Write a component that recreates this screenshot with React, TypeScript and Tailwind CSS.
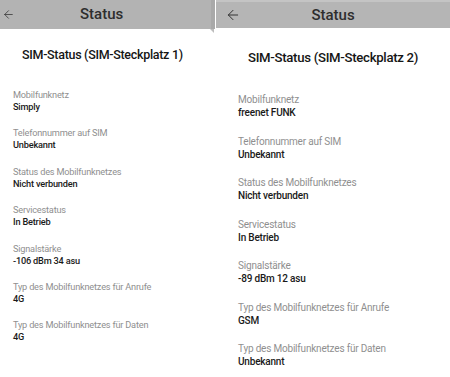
import React from 'react';
import { ArrowLeft } from 'lucide-react';

type Row = { label: string; value: string };

const sim1: Row[] = [
  { label: 'Mobilfunknetz', value: 'Simply' },
  { label: 'Telefonnummer auf SIM', value: 'Unbekannt' },
  { label: 'Status des Mobilfunknetzes', value: 'Nicht verbunden' },
  { label: 'Servicestatus', value: 'In Betrieb' },
  { label: 'Signalstärke', value: '-106 dBm 34 asu' },
  { label: 'Typ des Mobilfunknetzes für Anrufe', value: '4G' },
  { label: 'Typ des Mobilfunknetzes für Daten', value: '4G' },
];

const sim2: Row[] = [
  { label: 'Mobilfunknetz', value: 'freenet FUNK' },
  { label: 'Telefonnummer auf SIM', value: 'Unbekannt' },
  { label: 'Status des Mobilfunknetzes', value: 'Nicht verbunden' },
  { label: 'Servicestatus', value: 'In Betrieb' },
  { label: 'Signalstärke', value: '-89 dBm 12 asu' },
  { label: 'Typ des Mobilfunknetzes für Anrufe', value: 'GSM' },
  { label: 'Typ des Mobilfunknetzes für Daten', value: 'Unbekannt' },
];

export default function App() {
  return (
    <div
      className="w-[450px] h-[377px] bg-white flex overflow-hidden text-[#1c1c1c]"
      style={{ fontFamily: 'Roboto, "Noto Sans", sans-serif' }}
    >
      {/* Left screenshot, slightly smaller scale */}
      <section className="w-[215px] shrink-0 flex flex-col relative">
        <header className="h-[29px] bg-[#b3b3b3] flex items-center relative">
          <ArrowLeft className="absolute left-[2px] w-[13px] h-[13px] text-[#3a3a3a]" strokeWidth={1.5} />
          <h1 className="pl-[80px] text-[15px] font-medium text-[#2e2e2e]">Status</h1>
          <div className="absolute right-0 top-0 h-full w-[4px] bg-[#a9a9a9]" />
        </header>
        <div className="absolute right-[1px] top-[29px] w-0 h-0 border-l-[4px] border-l-transparent border-t-[4px] border-t-[#bdbdbd]" />
        <h2 className="mt-[18px] pl-[22px] text-[12.5px] leading-[16px] tracking-[-0.3px] font-medium text-[#151515]">
          SIM-Status (SIM-Steckplatz 1)
        </h2>
        <ul className="mt-[26px] pl-[13px] flex flex-col gap-[14.4px]">
          {sim1.map((r) => (
            <li key={r.label} className="flex flex-col tracking-[-0.2px]">
              <span className="text-[9.2px] leading-[12px] text-[#8f8f8f]">{r.label}</span>
              <span className="text-[9.2px] leading-[12px] font-medium text-[#1a1a1a]">{r.value}</span>
            </li>
          ))}
        </ul>
      </section>

      {/* Right screenshot */}
      <section className="flex-1 ml-[1px] flex flex-col">
        <header className="h-[28px] bg-[#b5b5b5] border-t-2 border-[#c4c4c4] flex items-center justify-center relative">
          <ArrowLeft className="absolute left-[9px] w-[16px] h-[16px] text-[#333]" strokeWidth={1.5} />
          <h1 className="text-[15px] font-medium text-[#2e2e2e]">Status</h1>
        </header>
        <h2 className="mt-[21px] pl-[32px] text-[13.2px] leading-[17px] tracking-[-0.3px] font-medium text-[#151515]">
          SIM-Status (SIM-Steckplatz 2)
        </h2>
        <ul className="mt-[27px] pl-[22px] flex flex-col gap-[15.5px]">
          {sim2.map((r) => (
            <li key={r.label} className="flex flex-col tracking-[-0.2px]">
              <span className="text-[10px] leading-[13px] text-[#8f8f8f]">{r.label}</span>
              <span className="text-[10px] leading-[13px] font-medium text-[#1a1a1a]">{r.value}</span>
            </li>
          ))}
        </ul>
      </section>
    </div>
  );
}
